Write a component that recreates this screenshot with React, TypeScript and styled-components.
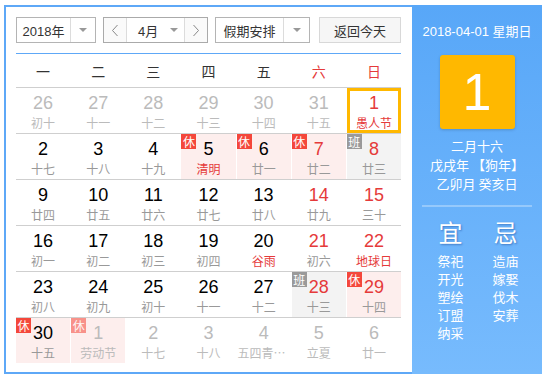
import React from "react"
import styled, { createGlobalStyle } from "styled-components"

const GlobalStyle = createGlobalStyle`
  body {
    margin: 0;
    background: #fff;
    font-family: "Liberation Sans", Arial, "Noto Sans CJK SC", sans-serif;
  }
`

const BLUE = "#5ea8f7"
const RED = "#e53a3a"
const BADGE_RED = "#f4473b"

type Badge = "休" | "班"

interface Day {
  d: number
  l: string
  muted?: boolean
  fest?: boolean
  badge?: Badge
  today?: boolean
}

const weeks: Day[][] = [
  [
    { d: 26, l: "初十", muted: true },
    { d: 27, l: "十一", muted: true },
    { d: 28, l: "十二", muted: true },
    { d: 29, l: "十三", muted: true },
    { d: 30, l: "十四", muted: true },
    { d: 31, l: "十五", muted: true },
    { d: 1, l: "愚人节", fest: true, today: true },
  ],
  [
    { d: 2, l: "十七" },
    { d: 3, l: "十八" },
    { d: 4, l: "十九" },
    { d: 5, l: "清明", fest: true, badge: "休" },
    { d: 6, l: "廿一", badge: "休" },
    { d: 7, l: "廿二", badge: "休" },
    { d: 8, l: "廿三", badge: "班" },
  ],
  [
    { d: 9, l: "廿四" },
    { d: 10, l: "廿五" },
    { d: 11, l: "廿六" },
    { d: 12, l: "廿七" },
    { d: 13, l: "廿八" },
    { d: 14, l: "廿九" },
    { d: 15, l: "三十" },
  ],
  [
    { d: 16, l: "初一" },
    { d: 17, l: "初二" },
    { d: 18, l: "初三" },
    { d: 19, l: "初四" },
    { d: 20, l: "谷雨", fest: true },
    { d: 21, l: "初六" },
    { d: 22, l: "地球日", fest: true },
  ],
  [
    { d: 23, l: "初八" },
    { d: 24, l: "初九" },
    { d: 25, l: "初十" },
    { d: 26, l: "十一" },
    { d: 27, l: "十二" },
    { d: 28, l: "十三", badge: "班" },
    { d: 29, l: "十四", badge: "休" },
  ],
  [
    { d: 30, l: "十五", badge: "休" },
    { d: 1, l: "劳动节", muted: true, badge: "休" },
    { d: 2, l: "十七", muted: true },
    { d: 3, l: "十八", muted: true },
    { d: 4, l: "五四青年节", muted: true },
    { d: 5, l: "立夏", muted: true },
    { d: 6, l: "廿一", muted: true },
  ],
]

const weekdays = ["一", "二", "三", "四", "五", "六", "日"]

const Page = styled.div`
  padding: 5px 0 0 4px;
`

const Widget = styled.div`
  display: flex;
  width: 538px;
  height: 369px;
`

const Main = styled.div`
  box-sizing: border-box;
  width: 408px;
  height: 100%;
  border: 2px solid ${BLUE};
  border-right: none;
  padding: 10px 11px 0 10px;
`

const Toolbar = styled.div`
  display: flex;
  height: 26px;
  gap: 7px;
  font-size: 13px;
  color: #333;
`

const SelectBox = styled.div<{ $w: number }>`
  box-sizing: border-box;
  width: ${(p) => p.$w}px;
  height: 26px;
  display: flex;
  border: 1px solid #b4b4b4;
  background: #fff;
`

const SelectText = styled.div`
  flex: 1;
  display: flex;
  align-items: center;
  justify-content: center;
  border-right: 1px solid #dcdcdc;
`

const ArrowCell = styled.div<{ $w: number }>`
  width: ${(p) => p.$w}px;
  display: flex;
  align-items: center;
  justify-content: center;
`

const Caret = styled.span`
  width: 0;
  height: 0;
  border-left: 4px solid transparent;
  border-right: 4px solid transparent;
  border-top: 4px solid #999;
`

const MonthGroup = styled.div`
  box-sizing: border-box;
  width: 105px;
  height: 26px;
  display: flex;
  border: 1px solid #aaa;
`

const StepButton = styled.div<{ $side: "left" | "right" }>`
  width: 22px;
  display: flex;
  align-items: center;
  justify-content: center;
  background: #fafafa;
  ${(p) => (p.$side === "left" ? "border-right" : "border-left")}: 1px solid #dcdcdc;
`

const MonthSelect = styled.div`
  flex: 1;
  display: flex;
  align-items: center;
  padding-left: 11px;
  gap: 12px;
`

const TodayButton = styled.div`
  box-sizing: border-box;
  width: 82px;
  height: 26px;
  margin-left: 2px;
  display: flex;
  align-items: center;
  justify-content: center;
  border: 1px solid #d8d8d8;
  background: #f6f6f6;
`

const BlueRule = styled.div`
  margin-top: 10px;
  height: 1px;
  background: ${BLUE};
`

const HeaderRow = styled.div`
  display: grid;
  grid-template-columns: repeat(7, 1fr);
  column-gap: 1px;
  height: 33px;
  align-items: center;
  border-bottom: 1px solid #cfcfcf;
  font-size: 14px;
  font-family: "Noto Sans CJK SC", sans-serif;
`

const WeekdayLabel = styled.div<{ $weekend: boolean }>`
  text-align: center;
  color: ${(p) => (p.$weekend ? RED : "#333")};
`

const WeekRow = styled.div`
  display: grid;
  grid-template-columns: repeat(7, 1fr);
  column-gap: 1px;
  height: 45px;
  border-bottom: 1px solid #cfcfcf;

  &:last-child {
    border-bottom: none;
  }
`

const Cell = styled.div<{ $bg: string; $today: boolean }>`
  position: relative;
  box-sizing: border-box;
  min-width: 0;
  padding-top: 5px;
  text-align: center;
  background: ${(p) => p.$bg};
  box-shadow: ${(p) => (p.$today ? "inset 0 0 0 3px #ffb800" : "none")};
`

const DayNum = styled.div<{ $color: string }>`
  font-size: 18px;
  line-height: 20px;
  color: ${(p) => p.$color};
`

const Lunar = styled.div<{ $color: string }>`
  font-size: 12px;
  line-height: 20px;
  color: ${(p) => p.$color};
  font-family: "Noto Sans CJK SC", sans-serif;
  white-space: nowrap;
  overflow: hidden;
  text-overflow: ellipsis;
  padding: 0 1px;
`

const Tag = styled.span<{ $kind: Badge; $faded: boolean }>`
  position: absolute;
  top: 0;
  left: 0;
  width: 15px;
  height: 15px;
  font-size: 12px;
  line-height: 15px;
  color: #fff;
  text-align: center;
  font-family: "Noto Sans CJK SC", sans-serif;
  background: ${(p) => (p.$kind === "休" ? BADGE_RED : "#9a9a9a")};
  opacity: ${(p) => (p.$faded ? 0.55 : 1)};
`

const Side = styled.div`
  width: 130px;
  height: 100%;
  display: flex;
  flex-direction: column;
  align-items: center;
  color: #fff;
  background: linear-gradient(#58a7f8, #77bbfd);
  font-family: "Liberation Sans", Arial, "Noto Sans CJK SC", sans-serif;
`

const DateLine = styled.div`
  margin-top: 19px;
  font-size: 13px;
  line-height: 16px;
`

const BigDay = styled.div`
  margin-top: 15px;
  width: 75px;
  height: 74px;
  border-radius: 3px;
  background: #ffb800;
  box-shadow: 0 1px 3px rgba(0, 0, 0, 0.18);
  display: flex;
  align-items: center;
  justify-content: center;
  font-size: 52px;
  line-height: 74px;
`

const LunarInfo = styled.div`
  margin-top: 7px;
  font-size: 13px;
  line-height: 19px;
  text-align: center;
  white-space: pre;
  font-family: "Noto Sans CJK SC", sans-serif;
`

const Divider = styled.div`
  margin-top: 12px;
  width: 110px;
  height: 2px;
  background: rgba(255, 255, 255, 0.3);
`

const Almanac = styled.div`
  margin-top: 10px;
  padding-left: 2px;
  display: grid;
  grid-template-columns: 55px 55px;
  text-align: center;
  font-family: "Noto Sans CJK SC", sans-serif;
`

const AlmanacTitle = styled.div`
  font-size: 24px;
  line-height: 30px;
  text-shadow: 1px 1px 2px rgba(0, 40, 120, 0.4);
  margin-bottom: 5px;
`

const AlmanacItem = styled.div`
  font-size: 13px;
  line-height: 18px;
`

const Chevron = ({ dir }: { dir: "left" | "right" }) => (
  <svg width="8" height="13" viewBox="0 0 8 13">
    <polyline
      points={dir === "left" ? "6.5,1 1.5,6.5 6.5,12" : "1.5,1 6.5,6.5 1.5,12"}
      fill="none"
      stroke="#888"
      strokeWidth="1"
    />
  </svg>
)

const DayCell = ({ day, col }: { day: Day; col: number }) => {
  const weekend = col >= 5
  let numColor = "#000"
  let lunarColor = "#999"
  if (day.muted) {
    numColor = "#bbb"
    lunarColor = "#bbb"
  } else {
    if (weekend) numColor = RED
    if (day.fest) lunarColor = RED
  }
  let bg = "transparent"
  if (day.badge === "休") bg = "#fdeeed"
  if (day.badge === "班") bg = "#f3f3f3"
  return (
    <Cell $bg={bg} $today={!!day.today}>
      {day.badge && (
        <Tag $kind={day.badge} $faded={!!day.muted}>
          {day.badge}
        </Tag>
      )}
      <DayNum $color={numColor}>{day.d}</DayNum>
      <Lunar $color={lunarColor}>{day.l}</Lunar>
    </Cell>
  )
}

const yi = ["祭祀", "开光", "塑绘", "订盟", "纳采"]
const ji = ["造庙", "嫁娶", "伐木", "安葬"]

export default function App() {
  return (
    <>
      <GlobalStyle />
      <Page>
        <Widget>
          <Main>
            <Toolbar>
              <SelectBox $w={80}>
                <SelectText>2018年</SelectText>
                <ArrowCell $w={24}>
                  <Caret />
                </ArrowCell>
              </SelectBox>
              <MonthGroup>
                <StepButton $side="left">
                  <Chevron dir="left" />
                </StepButton>
                <MonthSelect>
                  <span>4月</span>
                  <Caret />
                </MonthSelect>
                <StepButton $side="right">
                  <Chevron dir="right" />
                </StepButton>
              </MonthGroup>
              <SelectBox $w={95}>
                <SelectText>假期安排</SelectText>
                <ArrowCell $w={25}>
                  <Caret />
                </ArrowCell>
              </SelectBox>
              <TodayButton>返回今天</TodayButton>
            </Toolbar>
            <BlueRule />
            <HeaderRow>
              {weekdays.map((w, i) => (
                <WeekdayLabel key={w} $weekend={i >= 5}>
                  {w}
                </WeekdayLabel>
              ))}
            </HeaderRow>
            {weeks.map((week, r) => (
              <WeekRow key={r}>
                {week.map((day, c) => (
                  <DayCell key={c} day={day} col={c} />
                ))}
              </WeekRow>
            ))}
          </Main>
          <Side>
            <DateLine>2018-04-01 星期日</DateLine>
            <BigDay>1</BigDay>
            <LunarInfo>
              <div>二月十六</div>
              <div>戊戌年 【狗年】</div>
              <div>乙卯月 癸亥日</div>
            </LunarInfo>
            <Divider />
            <Almanac>
              <div>
                <AlmanacTitle>宜</AlmanacTitle>
                {yi.map((t) => (
                  <AlmanacItem key={t}>{t}</AlmanacItem>
                ))}
              </div>
              <div>
                <AlmanacTitle>忌</AlmanacTitle>
                {ji.map((t) => (
                  <AlmanacItem key={t}>{t}</AlmanacItem>
                ))}
              </div>
            </Almanac>
          </Side>
        </Widget>
      </Page>
    </>
  )
}
